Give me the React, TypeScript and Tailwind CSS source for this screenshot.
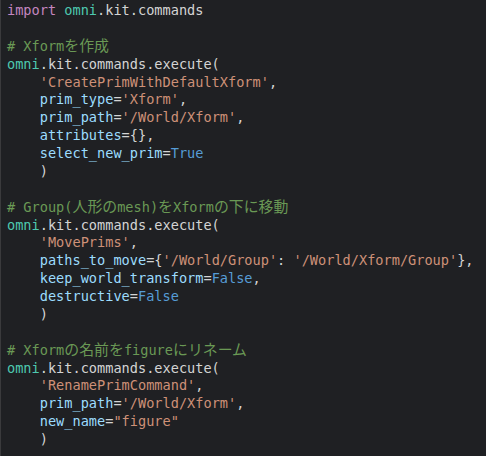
const C = {
  kw: 'text-[#c586c0]',
  mod: 'text-[#4ec9b0]',
  txt: 'text-[#d4d4d4]',
  str: 'text-[#ce9178]',
  cmt: 'text-[#6a9955]',
  prm: 'text-[#9cdcfe]',
  con: 'text-[#569cd6]',
}

type Tok = [string, string]

const lines: Tok[][] = [
  [[C.kw, 'import'], [C.txt, ' '], [C.mod, 'omni'], [C.txt, '.kit.commands']],
  [],
  [[C.cmt, '# Xformを作成']],
  [[C.mod, 'omni'], [C.txt, '.kit.commands.execute(']],
  [[C.txt, '    '], [C.str, "'CreatePrimWithDefaultXform'"], [C.txt, ',']],
  [[C.txt, '    '], [C.prm, 'prim_type'], [C.txt, '='], [C.str, "'Xform'"], [C.txt, ',']],
  [[C.txt, '    '], [C.prm, 'prim_path'], [C.txt, '='], [C.str, "'/World/Xform'"], [C.txt, ',']],
  [[C.txt, '    '], [C.prm, 'attributes'], [C.txt, '={},']],
  [[C.txt, '    '], [C.prm, 'select_new_prim'], [C.txt, '='], [C.con, 'True']],
  [[C.txt, '    )']],
  [],
  [[C.cmt, '# Group(人形のmesh)をXformの下に移動']],
  [[C.mod, 'omni'], [C.txt, '.kit.commands.execute(']],
  [[C.txt, '    '], [C.str, "'MovePrims'"], [C.txt, ',']],
  [
    [C.txt, '    '],
    [C.prm, 'paths_to_move'],
    [C.txt, '={'],
    [C.str, "'/World/Group'"],
    [C.txt, ': '],
    [C.str, "'/World/Xform/Group'"],
    [C.txt, '},'],
  ],
  [[C.txt, '    '], [C.prm, 'keep_world_transform'], [C.txt, '='], [C.con, 'False'], [C.txt, ',']],
  [[C.txt, '    '], [C.prm, 'destructive'], [C.txt, '='], [C.con, 'False']],
  [[C.txt, '    )']],
  [],
  [[C.cmt, '# Xformの名前をfigureにリネーム']],
  [[C.mod, 'omni'], [C.txt, '.kit.commands.execute(']],
  [[C.txt, '    '], [C.str, "'RenamePrimCommand'"], [C.txt, ',']],
  [[C.txt, '    '], [C.prm, 'prim_path'], [C.txt, '='], [C.str, "'/World/Xform'"], [C.txt, ',']],
  [[C.txt, '    '], [C.prm, 'new_name'], [C.txt, '='], [C.str, '"figure"']],
  [[C.txt, '    )']],
]

// CJK glyphs are wider than half-width cells in the editor font
function Text({ t }: { t: string }) {
  const parts = t.split(/([\u3040-\u30ff\u4e00-\u9fff]+)/)
  return (
    <>
      {parts.map((p, k) =>
        k % 2 === 1 ? (
          <span key={k} className="text-[14.9px]">
            {p}
          </span>
        ) : (
          p
        ),
      )}
    </>
  )
}

export default function App() {
  return (
    <div className="h-[456px] w-[486px] overflow-hidden border-l border-[#3a3a3c] bg-[#1f2023] pl-[6px] pt-[2px]">
      <pre className="font-['DejaVu_Sans_Mono','Noto_Sans_CJK_JP',monospace] text-[13.6px] leading-[17.88px] whitespace-pre">
        {lines.map((toks, i) => (
          <div key={i} className="h-[17.88px]">
            {toks.map(([cls, t], j) => (
              <span key={j} className={cls}>
                <Text t={t} />
              </span>
            ))}
          </div>
        ))}
      </pre>
    </div>
  )
}
